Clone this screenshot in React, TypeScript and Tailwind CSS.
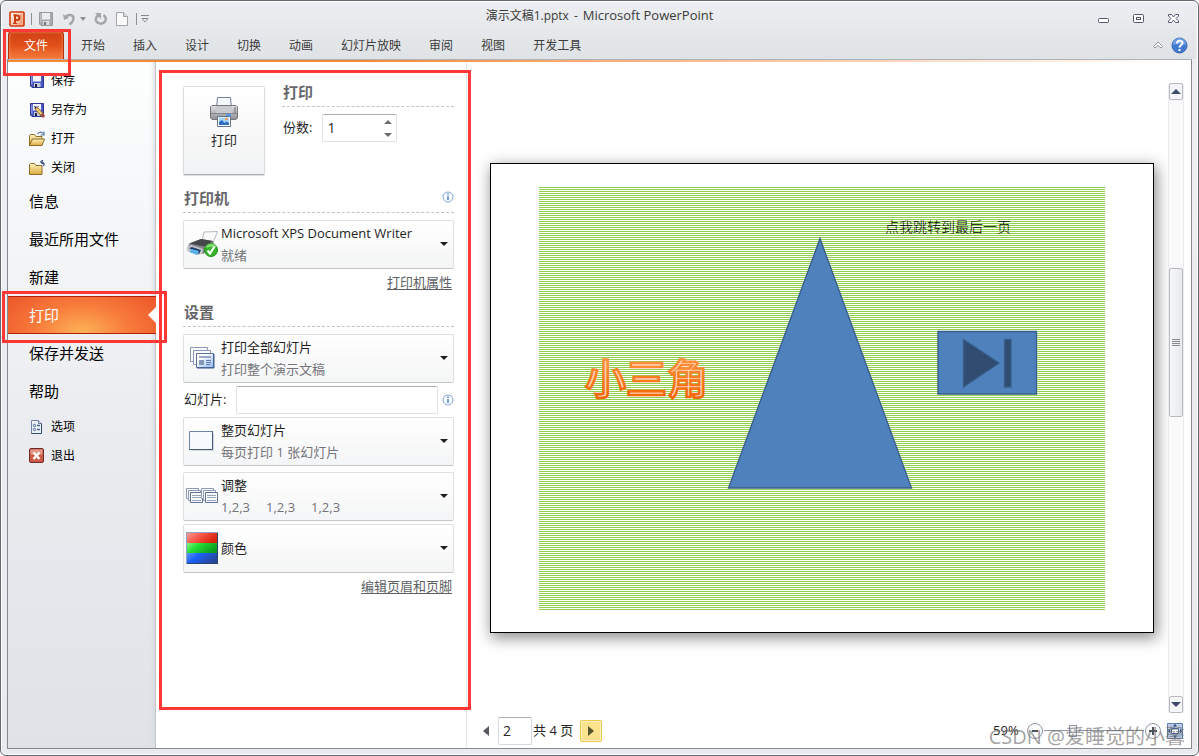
import { useState } from "react";
import type { ReactNode } from "react";

const tabs = [
  "开始",
  "插入",
  "设计",
  "切换",
  "动画",
  "幻灯片放映",
  "审阅",
  "视图",
  "开发工具",
];

function PowerPointLogo() {
  return (
    <svg width="16" height="16" viewBox="0 0 16 16" aria-hidden="true">
      <defs>
        <linearGradient id="logoFill" x1="0" y1="0" x2="1" y2="1">
          <stop offset="0" stopColor="#fff" />
          <stop offset="1" stopColor="#f79a72" />
        </linearGradient>
      </defs>
      <rect x="1" y="1" width="14" height="14" rx="1" fill="url(#logoFill)" stroke="#cf3a0c" strokeWidth="1.600" />
      <path d="M11 3h2v10H7v-1h4z" fill="#f4a384" />
      <path d="M6 12.500V4.500h2.200a2.200 2.200 0 0 1 0 4.400H6" fill="none" stroke="#c8400f" strokeWidth="2" />
      <path d="M4 4h3M4 12.500h4" stroke="#c8400f" strokeWidth="1.200" />
    </svg>
  );
}

function FloppyIcon({ gray, pencil }: { gray?: boolean; pencil?: boolean }) {
  return (
    <svg width="16" height="16" viewBox="0 0 16 16" aria-hidden="true">
      <path d="M1.500 1.500h13v13H3l-1.500-1.500z" fill={gray ? "#a6a7aa" : "#4a58c4"} stroke={gray ? "#98999c" : "#2f388e"} />
      <path d="M4 2h8v6.500H4z" fill={gray ? "#ecedef" : "#f2f4ff"} />
      <path d="M2 2.500h1.500v9H2z" fill={gray ? "#bcbdc0" : "#8994e4"} />
      <path d="M5 10h6.500v4H5z" fill={gray ? "#d8d9db" : "#c4cad8"} />
      <path d="M6 11h2v3H6z" fill={gray ? "#77787b" : "#1c2046"} />
      {pencil && (
        <>
          <path d="M5 4.500h5M5 6.500h4" stroke="#9aa3cf" />
          <path d="M7 6l6.500 7" stroke="#8d6420" strokeWidth="3.600" />
          <path d="M7 6l6 6.500" stroke="#f5cf72" strokeWidth="2" />
          <path d="M12.500 12l2.500 3" stroke="#a34a40" strokeWidth="3" />
          <path d="M5 4l3 1.500-1.500 1.500z" fill="#333" />
        </>
      )}
    </svg>
  );
}

function FolderIcon({ open }: { open?: boolean }) {
  return (
    <svg width="16" height="16" viewBox="0 0 16 16" aria-hidden="true">
      <defs>
        <linearGradient id="folderFill" x1="0" y1="0" x2="0" y2="1">
          <stop offset="0" stopColor="#fdf3bf" />
          <stop offset="1" stopColor="#dba93c" />
        </linearGradient>
      </defs>
      <path d="M.5 14.500v-10l1-1h4l1.500 2h6v9z" fill="url(#folderFill)" stroke="#8b6c28" />
      {open ? (
        <>
          <path d="M.5 14.500l3-6.500h12l-2.500 6.500z" fill="url(#folderFill)" stroke="#8b6c28" />
          <path d="M8.500 3c1-2 4-2.500 5.500-.5M15 .5V4h-3.500" fill="none" stroke="#4d6f9e" strokeWidth="1.200" />
        </>
      ) : (
        <path d="M14.500 6c1-2 .5-3.500-1.500-4M11.500 2l2.500-2M11.500 2l2.500 2" fill="none" stroke="#344d78" strokeWidth="1.200" />
      )}
    </svg>
  );
}

function OptionsIcon() {
  return (
    <svg width="16" height="16" viewBox="0 0 16 16" aria-hidden="true">
      <path d="M2.500 1.500h7l3 3v10h-10z" fill="#edf2f8" stroke="#70849e" />
      <path d="M12.500 4v10.500h-10" fill="none" stroke="#334b6d" />
      <path d="M9.500 1.500v3h3" fill="#c4d2e4" stroke="#70849e" />
      <circle cx="5.500" cy="6.500" r="1.200" fill="none" stroke="#4c6790" />
      <circle cx="5.500" cy="10.500" r="1.200" fill="none" stroke="#4c6790" />
      <path d="M8 6.500h3M8 10.500h3" stroke="#4c6790" strokeWidth="1.400" />
    </svg>
  );
}

function ExitIcon() {
  return (
    <svg width="16" height="16" viewBox="0 0 16 16" aria-hidden="true">
      <rect x=".5" y=".5" width="14" height="14" rx="1.500" fill="#cc5a48" stroke="#6f2c26" />
      <path d="M1.500 1.500h12v5h-12z" fill="#e2988a" />
      <path d="M4.500 4.500l6 6.500M10.500 4.500l-6 6.500" stroke="#fff" strokeWidth="2.400" />
    </svg>
  );
}

function PrinterIcon() {
  return (
    <svg width="30" height="32" viewBox="0 0 30 32" aria-hidden="true">
      <defs>
        <linearGradient id="printerBody" x1="0" y1="0" x2="0" y2="1">
          <stop offset="0" stopColor="#e4e4e6" />
          <stop offset="1" stopColor="#8e8f94" />
        </linearGradient>
      </defs>
      <path d="M7.500 12l1-10.500h13l1 10.500z" fill="#f4f7fc" stroke="#71819a" />
      <path d="M1.500 11l1.500-1.500h24l1.500 1.500v11L27 23.500H3L1.500 22z" fill="url(#printerBody)" stroke="#77787d" />
      <path d="M7 10h16v7H7z" fill="#c9cace" />
      <path d="M2 17.500h26" stroke="#84868c" />
      <path d="M25 12h2M25 14h2M25 16h2" stroke="#686a70" />
      <path d="M17 19h5" stroke="#4f9bf0" strokeWidth="2" />
      <path d="M8.500 20.500h13v10h-13z" fill="#fff" stroke="#61738f" />
      <path d="M10 21.500h10v7.500H10z" fill="#a8d2f7" />
      <path d="M10 29v-3l3-2 2.500 3 2-1.500L20 27v2z" fill="#2e6fc4" />
      <circle cx="17.500" cy="23" r="1.300" fill="#f29a4a" />
    </svg>
  );
}

function XpsPrinterIcon() {
  return (
    <svg width="32" height="32" viewBox="0 0 32 32" aria-hidden="true">
      <path d="M18 4l13.500-.5L27 15l-11-2z" fill="#fafafa" stroke="#b9babd" />
      <path d="M3 16l12-5 12 2 1 6-11 7-16-5z" fill="#85878b" />
      <path d="M3 15.500l12-4.500 12 2-9 5.500z" fill="#46474a" />
      <path d="M1 19l4-2 12 4-1 5-4 1-11-4z" fill="#c6c8cc" />
      <path d="M3 20l3-1 9 3-2 4z" fill="#1e3d66" />
      <path d="M6 21l7 2-2 4-8-3z" fill="#58b2ea" />
      <circle cx="25" cy="22" r="6.500" fill="#35b52b" stroke="#1e8e19" />
      <path d="M19.500 20a6 6 0 0 1 11-1q-5-1-11 1z" fill="#7edb70" />
      <path d="M21.500 22.500l2.500 3 4.500-7" fill="none" stroke="#fff" strokeWidth="2.200" />
    </svg>
  );
}

function SlidesIcon() {
  return (
    <svg width="32" height="32" viewBox="0 0 32 32" aria-hidden="true">
      <defs>
        <linearGradient id="slideFill" x1="0" y1="0" x2="1" y2="1">
          <stop offset=".3" stopColor="#fff" />
          <stop offset="1" stopColor="#8fb5f5" />
        </linearGradient>
      </defs>
      <path d="M4.500 5.500h17v14h-17z" fill="#fcfcfe" stroke="#8b98b4" />
      <path d="M7.500 8.500h17v14h-17z" fill="#fcfcfe" stroke="#8b98b4" />
      <path d="M10.500 11.500h17v14h-17z" fill="url(#slideFill)" stroke="#5a7199" />
      <path d="M28 12v14H11" fill="none" stroke="#33588f" />
      <path d="M13 15h12" stroke="#9aaac6" strokeWidth="2" />
      <path d="M13 18h5v5h-5z" fill="#8598b9" />
      <path d="M20 18.500h5M20 20.500h5M20 22.500h4" stroke="#5e7bab" />
    </svg>
  );
}

function FullPageIcon() {
  return (
    <svg width="32" height="32" viewBox="0 0 32 32" aria-hidden="true">
      <path d="M5 8h23v18H5z" fill="#d5d8dd" />
      <path d="M3.500 6.500h23v18h-23z" fill="#f8f9fd" stroke="#7085a3" />
      <path d="M26.500 6v18.500H3" fill="none" stroke="#435b7d" />
    </svg>
  );
}

function CollateIcon() {
  return (
    <svg width="32" height="32" viewBox="0 0 32 32" aria-hidden="true">
      {[0, 15].map((x) => (
        <g key={x} transform={`translate(${x} 0)`} fill="#fbfcff" stroke="#8b99b3">
          <path d="M.5 8.500h12v10H.5z" />
          <path d="M2.500 10.500h12v10h-12z" />
          <path d="M4.500 12.500h12v10h-12z" stroke="#5f7394" />
          <path d="M6 15.500h9M6 17.500h9M6 20.500h9" stroke="#93a5c4" />
        </g>
      ))}
    </svg>
  );
}

function ColorIcon() {
  return (
    <svg width="32" height="32" viewBox="0 0 32 32" aria-hidden="true">
      <defs>
        <linearGradient id="redBand" x1="0" y1="0" x2="1" y2=".4">
          <stop offset="0" stopColor="#f7a39b" />
          <stop offset=".5" stopColor="#f8564a" />
          <stop offset="1" stopColor="#d92310" />
        </linearGradient>
        <linearGradient id="greenBand" x1="0" y1="0" x2="1" y2=".4">
          <stop offset="0" stopColor="#8cf58c" />
          <stop offset=".4" stopColor="#24e034" />
          <stop offset="1" stopColor="#0c9c20" />
        </linearGradient>
        <linearGradient id="blueBand" x1="0" y1="0" x2="1" y2=".4">
          <stop offset="0" stopColor="#6a9cf5" />
          <stop offset=".4" stopColor="#1b60f8" />
          <stop offset="1" stopColor="#27479c" />
        </linearGradient>
      </defs>
      <path d="M0 0h32v11H0z" fill="url(#redBand)" />
      <path d="M0 11h32v10H0z" fill="url(#greenBand)" />
      <path d="M0 21h32v11H0z" fill="url(#blueBand)" />
      <path d="M.5 32V.5H32" fill="none" stroke="#8fa4c8" />
      <path d="M31.500 1v30.500H1" fill="none" stroke="#28456e" />
    </svg>
  );
}

function InfoIcon() {
  return (
    <svg width="12" height="12" viewBox="0 0 12 12" aria-hidden="true">
      <circle cx="6" cy="6" r="5" fill="#f8fbff" stroke="#83a5d8" />
      <path d="M6 2.500V4M6 5v4" stroke="#4978c0" strokeWidth="1.400" />
    </svg>
  );
}

function TitleBar() {
  return (
    <header className="grid h-[30px] grid-cols-[1fr_auto_1fr] text-[#3b3b3b]">
      <div className="flex items-center gap-2 pt-1.5 pl-0.5">
        <PowerPointLogo />
        <div className="-mx-0.5 h-3 w-px bg-[#8d8f93]"></div>
        <button aria-label="保存">
          <FloppyIcon gray />
        </button>
        <button aria-label="撤消" className="flex items-center gap-1">
          <svg width="14" height="14" viewBox="0 0 14 14">
            <path d="M1 2l1 6 5-2z" fill="#a3a5a8" />
            <path d="M3 6c2-4 8-4 8.500 0 .2 3-1.500 4.500-4 6.500" fill="none" stroke="#a3a5a8" strokeWidth="2.400" />
          </svg>
          <svg width="6" height="4" viewBox="0 0 6 4">
            <path d="M0 0h6L3 4z" fill="#8d8f93" />
          </svg>
        </button>
        <button aria-label="重复">
          <svg width="14" height="14" viewBox="0 0 14 14">
            <path d="M5.500 3C2 4 1 7.500 2.500 9.500c2 3 6.500 3 8.500 0 1.500-2.500.5-5-1.500-6.500" fill="none" stroke="#a3a5a8" strokeWidth="2.400" />
            <path d="M1 1h6v6z" fill="#a3a5a8" />
          </svg>
        </button>
        <button aria-label="新建">
          <svg width="12" height="14" viewBox="0 0 12 14">
            <path d="M.5.500h7l4 4v9H.5z" fill="#fafafa" stroke="#a2a4a8" />
            <path d="M7.500.500v4h4" fill="#ddd" stroke="#a2a4a8" />
          </svg>
        </button>
        <div className="h-3 w-px bg-[#8d8f93]"></div>
        <button aria-label="自定义快速访问工具栏" className="-ml-1">
          <svg width="8" height="8" viewBox="0 0 8 8">
            <path d="M0 .5h8" stroke="#85878b" />
            <path d="M1 3.500h6L4 7z" fill="#fff" stroke="#85878b" />
          </svg>
        </button>
      </div>
      <h1 className="flex items-center gap-[5px] text-xs whitespace-pre">
        <span>演示文稿1.pptx</span>
        <span>-</span>
        <span className="text-[13px]">Microsoft PowerPoint</span>
      </h1>
      <div className="flex items-center justify-end gap-6 pt-1.5 pr-[13px]">
        <button aria-label="最小化">
          <svg width="11" height="12" viewBox="0 0 11 12">
            <rect x=".5" y="5.500" width="10" height="4" rx="1" fill="#fff" stroke="#535670" />
          </svg>
        </button>
        <button aria-label="最大化">
          <svg width="11" height="12" viewBox="0 0 11 12">
            <rect x=".5" y="1.500" width="10" height="8" rx="1" fill="#fff" stroke="#535670" />
            <rect x="3.500" y="4.500" width="4" height="2" fill="#fff" stroke="#535670" />
          </svg>
        </button>
        <button aria-label="关闭">
          <svg width="11" height="12" viewBox="0 0 11 12">
            <path d="M.5 1.500h3l2 2.500 2-2.500h3v1.500L8 5.500 10.500 8v1.500h-3L5.500 7l-2 2.500h-3V8L3 5.500.5 3z" fill="#fff" stroke="#535670" />
          </svg>
        </button>
      </div>
    </header>
  );
}

function Ribbon() {
  return (
    <nav className="flex h-7 items-stretch text-xs text-[#3b3b3b]">
      <div className="relative z-20 mr-[3px] ml-px flex">
        <button className="w-14 rounded-t-sm border border-b-0 border-[#b5300a] bg-linear-to-b from-[#cf3f14] via-[#e2501a] to-[#f47a3a] text-white shadow-[inset_0_0_3px_#f79a60]">
          文件
        </button>
        <div className="pointer-events-none absolute -top-0.5 -right-[7px] -bottom-[17px] -left-[5px] border-3 border-[#ff3737]"></div>
      </div>
      {tabs.map((tab) => (
        <button key={tab} className="px-3.5 pt-0.5 whitespace-nowrap">
          {tab}
        </button>
      ))}
      <div className="ml-auto flex items-center gap-2 pr-1">
        <button aria-label="功能区最小化">
          <svg width="10" height="8" viewBox="0 0 10 8">
            <path d="M.5 5.500L5 1l4.500 4.500-1.500 1.500-3-2.500L2 7z" fill="#fff" stroke="#929498" />
          </svg>
        </button>
        <button aria-label="帮助">
          <svg width="17" height="17" viewBox="0 0 17 17">
            <circle cx="8.500" cy="8.500" r="7.500" fill="#4179cf" stroke="#3463ae" />
            <path d="M1.500 8a7 7 0 0 1 14 0q-7-2-14 0z" fill="#6f9de2" />
            <path d="M6 6.500C6 3 11.500 3 11.500 6c0 2-3 2-3 4.500" fill="none" stroke="#fff" strokeWidth="2" />
            <path d="M8.500 12v2" stroke="#fff" strokeWidth="2" />
          </svg>
        </button>
      </div>
    </nav>
  );
}

type SmallItemProps = {
  icon: ReactNode;
  label: string;
};

function SmallItem({ icon, label }: SmallItemProps) {
  return (
    <button className="flex h-[29px] items-center gap-1.5 pl-[21px] text-xs">
      {icon}
      {label}
    </button>
  );
}

function LargeItem({ label }: { label: string }) {
  return <button className="h-[38px] pl-[21px] text-left text-[15px]">{label}</button>;
}

function Sidebar() {
  return (
    <aside className="flex w-[148px] shrink-0 flex-col border-r border-[#c0c4c9] bg-linear-to-b from-[#fdfefe] via-[#ebedf0] to-[#dfe2e7] pt-1 text-black shadow-[inset_-4px_0_5px_-3px_#d3d7dc]">
      <SmallItem icon={<FloppyIcon />} label="保存" />
      <SmallItem icon={<FloppyIcon pencil />} label="另存为" />
      <SmallItem icon={<FolderIcon open />} label="打开" />
      <SmallItem icon={<FolderIcon />} label="关闭" />
      <LargeItem label="信息" />
      <LargeItem label="最近所用文件" />
      <LargeItem label="新建" />
      <div className="relative z-20 -mr-px flex h-[38px]">
        <button className="flex flex-1 items-center justify-between border-y border-[#b3200c] bg-[radial-gradient(ellipse_75px_45px_at_50%_100%,#fdb458,#f87d3c_60%,#ea4e26_140%)] pl-[21px] text-[15px] text-white">
          打印
          <svg width="8" height="16" viewBox="0 0 8 16" aria-hidden="true">
            <path d="M8 0v16L0 8z" fill="#fff" />
          </svg>
        </button>
        <div className="pointer-events-none absolute -top-[5px] -right-[11px] -bottom-[9px] -left-1.5 border-3 border-[#ff3737]"></div>
      </div>
      <LargeItem label="保存并发送" />
      <LargeItem label="帮助" />
      <div className="mt-0.5 flex flex-col">
        <SmallItem icon={<OptionsIcon />} label="选项" />
        <SmallItem icon={<ExitIcon />} label="退出" />
      </div>
    </aside>
  );
}

function SectionHeading({ title, info }: { title: string; info?: boolean }) {
  return (
    <div className="flex h-7 items-center justify-between border-b border-dashed border-[#c3c4c8]">
      <h2 className="pl-px text-[15px] font-bold text-[#66666a]">{title}</h2>
      {info && (
        <button aria-label="打印机信息" className="pb-1">
          <InfoIcon />
        </button>
      )}
    </div>
  );
}

type PickerProps = {
  icon: ReactNode;
  title: string;
  children?: ReactNode;
};

function Picker({ icon, title, children }: PickerProps) {
  return (
    <button
      aria-haspopup="listbox"
      className="flex h-[49px] w-full items-center gap-[3px] rounded-xs border border-[#dddfe1] border-b-[#c4c6c8] bg-linear-to-b from-white to-[#f4f5f6] pr-[5px] pb-0.5 pl-0.5 text-left text-[13px]"
    >
      {icon}
      <span className="flex flex-1 flex-col leading-[22px] whitespace-nowrap">
        <span className="text-[#1e1e1e]">{title}</span>
        {children && <span className="flex gap-4 text-[#747478]">{children}</span>}
      </span>
      <svg width="8" height="4" viewBox="0 0 8 4" aria-hidden="true">
        <path d="M0 0h8L4 4z" fill="#1e1e1e" />
      </svg>
    </button>
  );
}

function PrintSettings() {
  const [copies, setCopies] = useState(1);

  return (
    <section className="relative z-10 w-[311px] shrink-0 border-r border-[#e6e7e9] pt-[17px] pr-3 pl-[27px] text-[13px] text-[#262626]">
      <div className="flex gap-[17px]">
        <button className="mt-[7px] flex h-[89px] w-[82px] flex-col items-center rounded-xs border border-[#d9dbdd] border-b-[#a9abad] bg-linear-to-b from-white to-[#f1f2f3] pt-[9px] shadow-[0_1px_1px_#ddd]">
          <PrinterIcon />
          <span className="leading-6">打印</span>
        </button>
        <div className="flex-1">
          <SectionHeading title="打印" />
          <div className="mt-[7px] flex items-center gap-2.5 pl-px">
            <label htmlFor="copies" className="whitespace-nowrap">
              份数:
            </label>
            <div className="flex h-7 w-[75px] rounded-xs border border-[#dde1e8] border-t-[#abadb3] bg-white">
              <input
                id="copies"
                type="text"
                inputMode="numeric"
                value={copies}
                onChange={(e) => setCopies(Number(e.target.value) || 1)}
                className="w-full min-w-0 pl-1 text-sm outline-none"
              />
              <div className="flex w-4 shrink-0 flex-col items-center justify-around">
                <button aria-label="增加" onClick={() => setCopies(copies + 1)}>
                  <svg width="8" height="4" viewBox="0 0 8 4">
                    <path d="M0 4h8L4 0z" fill="#6b6d70" />
                  </svg>
                </button>
                <button aria-label="减少" onClick={() => setCopies(Math.max(1, copies - 1))}>
                  <svg width="8" height="4" viewBox="0 0 8 4">
                    <path d="M0 0h8L4 4z" fill="#6b6d70" />
                  </svg>
                </button>
              </div>
            </div>
          </div>
        </div>
      </div>

      <div className="mt-2.5 mb-[7px]">
        <SectionHeading title="打印机" info />
      </div>
      <Picker icon={<XpsPrinterIcon />} title="Microsoft XPS Document Writer">
        就绪
      </Picker>
      <div className="flex h-7 items-center justify-end pr-0.5">
        <a href="#" className="text-[#5d5f63] underline underline-offset-2">
          打印机属性
        </a>
      </div>

      <div className="mt-0.5 mb-[7px]">
        <SectionHeading title="设置" />
      </div>
      <Picker icon={<SlidesIcon />} title="打印全部幻灯片">
        打印整个演示文稿
      </Picker>
      <div className="my-[3px] flex items-center gap-2.5 pl-px">
        <label htmlFor="slides" className="whitespace-nowrap">
          幻灯片:
        </label>
        <input
          id="slides"
          type="text"
          className="h-7 min-w-0 flex-1 rounded-xs border border-[#dde1e8] border-t-[#abadb3] bg-white px-1 outline-none"
        />
        <button aria-label="幻灯片信息" className="-ml-1.5">
          <InfoIcon />
        </button>
      </div>
      <Picker icon={<FullPageIcon />} title="整页幻灯片">
        每页打印 1 张幻灯片
      </Picker>
      <div className="mt-1.5 mb-[3px]">
        <Picker icon={<CollateIcon />} title="调整">
          <span>1,2,3</span>
          <span>1,2,3</span>
          <span>1,2,3</span>
        </Picker>
      </div>
      <Picker icon={<ColorIcon />} title="颜色" />
      <div className="flex h-7 items-center justify-end pr-0.5">
        <a href="#" className="text-[#5d5f63] underline underline-offset-2">
          编辑页眉和页脚
        </a>
      </div>

      <div className="pointer-events-none absolute top-2 -right-[5px] bottom-[38px] left-[3px] border-3 border-[#ff3737]"></div>
    </section>
  );
}

function Slide() {
  return (
    <div className="flex-1 border border-black bg-white shadow-[2px_4px_14px_1px_rgba(0,0,0,0.45)]">
      <svg viewBox="0 0 662 468" className="block w-full" role="img" aria-label="幻灯片 2">
        <defs>
          <pattern id="stripes" x="48" y="23" width="4" height="2" patternUnits="userSpaceOnUse">
            <rect width="4" height="1" fill="#92d050" shapeRendering="crispEdges" />
          </pattern>
          <linearGradient id="wordArt" x1="0" y1="0" x2="0" y2="1">
            <stop offset=".1" stopColor="#ff9a4a" />
            <stop offset=".9" stopColor="#f26400" />
          </linearGradient>
        </defs>
        <rect x="48" y="23" width="566" height="423" fill="url(#stripes)" />
        <path d="M329 74.500L420.500 324H237.500z" fill="#4f81bd" stroke="#385d8a" strokeWidth="1.300" />
        <text
          x="94"
          y="230"
          fontSize="41"
          fontWeight="500"
          fill="#ffd9c0"
          stroke="url(#wordArt)"
          strokeWidth="2.600"
          className="font-['Noto_Sans_CJK_SC',sans-serif]"
        >
          小三角
        </text>
        <text x="394" y="68" fontSize="14" className="font-['Noto_Sans_CJK_SC',sans-serif] font-light">
          点我跳转到最后一页
        </text>
        <g stroke="#385d8a" strokeWidth="1.300">
          <path d="M447 167.500h98.500v62.500H447z" fill="#4f81bd" />
          <path d="M472.500 175.500L508 199l-35.500 24z" fill="#304d71" />
          <path d="M513.500 175.500h6.500V223h-6.500z" fill="#304d71" />
        </g>
      </svg>
    </div>
  );
}

function ScrollBar() {
  return (
    <div className="flex w-4 shrink-0 flex-col self-stretch border-x border-[#ececee] bg-[#fafafb]">
      <button aria-label="向上滚动" className="flex h-[17px] items-center justify-center rounded-xs border border-[#b7babf] bg-[#f4f5f6]">
        <svg width="10" height="5" viewBox="0 0 10 5">
          <path d="M0 5h10L5 0z" fill="#3f4a6b" />
        </svg>
      </button>
      <div className="grow-[168] basis-0"></div>
      <div className="flex grow-[147] basis-0 flex-col items-center justify-center gap-px rounded-xs border border-[#b7babf] bg-linear-to-r from-[#f6f7f8] to-[#e7e9ea]">
        <div className="h-px w-2 bg-[#85888d]"></div>
        <div className="h-px w-2 bg-[#85888d]"></div>
        <div className="h-px w-2 bg-[#85888d]"></div>
        <div className="h-px w-2 bg-[#85888d]"></div>
      </div>
      <div className="grow-[279] basis-0"></div>
      <button aria-label="向下滚动" className="flex h-[17px] items-center justify-center rounded-xs border border-[#b7babf] bg-[#f4f5f6]">
        <svg width="10" height="5" viewBox="0 0 10 5">
          <path d="M0 0h10L5 5z" fill="#3f4a6b" />
        </svg>
      </button>
    </div>
  );
}

function PreviewFooter() {
  const [page, setPage] = useState(2);
  const [zoom, setZoom] = useState(59);

  return (
    <footer className="relative flex h-[35px] items-center pr-2 pl-4 text-sm text-[#262626]">
      <button aria-label="上一页" onClick={() => setPage(Math.max(1, page - 1))}>
        <svg width="6" height="10" viewBox="0 0 6 10">
          <path d="M6 0v10L0 5z" fill="#55585c" />
        </svg>
      </button>
      <input
        aria-label="当前页"
        type="text"
        value={page}
        onChange={(e) => setPage(Number(e.target.value) || 1)}
        className="ml-[9px] h-7 w-[34px] rounded-xs border border-[#d4dae4] border-t-[#abadb3] bg-white pl-1 outline-none"
      />
      <span className="pl-px text-[13px] whitespace-nowrap">共 4 页</span>
      <button
        aria-label="下一页"
        onClick={() => setPage(Math.min(4, page + 1))}
        className="ml-[7px] flex size-[22px] items-center justify-center rounded-xs border border-[#eec84c] bg-[#fbe28c] shadow-[inset_0_0_0_1px_#fdf3c4]"
      >
        <svg width="6" height="10" viewBox="0 0 6 10">
          <path d="M0 0v10l6-5z" fill="#55522c" />
        </svg>
      </button>

      <div className="ml-auto flex items-center">
        <label htmlFor="zoom" className="mr-1.5 w-7 text-[13px]">
          {zoom}%
        </label>
        <button aria-label="缩小" onClick={() => setZoom(Math.max(10, zoom - 10))}>
          <svg width="16" height="16" viewBox="0 0 16 16">
            <circle cx="8" cy="8" r="7.500" fill="#fdfdfe" stroke="#8d96a6" />
            <path d="M5 8h6" stroke="#4c525c" strokeWidth="2" />
          </svg>
        </button>
        <input
          id="zoom"
          type="range"
          min="10"
          max="190"
          value={zoom}
          onChange={(e) => setZoom(Number(e.target.value))}
          className="mx-px h-4 w-[100px] appearance-none bg-[linear-gradient(#8d96a6,#8d96a6)] bg-[length:100%_1px] bg-center bg-no-repeat [&::-webkit-slider-thumb]:h-3 [&::-webkit-slider-thumb]:w-2 [&::-webkit-slider-thumb]:appearance-none [&::-webkit-slider-thumb]:border [&::-webkit-slider-thumb]:border-[#8d96a6] [&::-webkit-slider-thumb]:bg-[#f4f5f7]"
        />
        <button aria-label="放大" onClick={() => setZoom(Math.min(190, zoom + 10))}>
          <svg width="16" height="16" viewBox="0 0 16 16">
            <circle cx="8" cy="8" r="7.500" fill="#fdfdfe" stroke="#8d96a6" />
            <path d="M4 8h8M8 4v8" stroke="#4c525c" strokeWidth="2" />
          </svg>
        </button>
        <button aria-label="缩放到页面" className="ml-1.5">
          <svg width="16" height="16" viewBox="0 0 16 16">
            <path d="M.5.500h15v15H.5z" fill="#b9cbe6" stroke="#5f7fb0" />
            <path d="M4.500 5.500h7v5h-7z" fill="#fff" stroke="#4a6592" />
            <path d="M6 3.500L8 1l2 2.500zM6 12.500L8 15l2-2.500zM3 6L1 8l2 2zM13 6l2 2-2 2z" fill="#24406e" />
          </svg>
        </button>
      </div>
      <p className="pointer-events-none absolute right-1.5 -bottom-px text-xl leading-6 whitespace-nowrap text-[#6e6e6e]/65">
        CSDN @爱睡觉的小馨
      </p>
    </footer>
  );
}

export default function App() {
  return (
    <div className="flex min-h-screen flex-col rounded-md border border-[#626972] bg-linear-to-b from-[#edeef2] to-[#e8eaee] px-1.5 pb-1.5 font-['Open_Sans','Noto_Sans_CJK_SC',sans-serif] shadow-[inset_0_0_0_1px_#fff]">
      <div className="-mx-1 bg-linear-to-b from-transparent to-[#dfe3e5] px-1">
        <TitleBar />
        <Ribbon />
      </div>
      <div className="flex flex-1 flex-col border border-[#868b92] border-t-[#aeb3b9] bg-white">
        <div className="h-0.5 bg-linear-to-r from-[#f58a35] from-30% to-white"></div>
        <div className="flex flex-1">
          <Sidebar />
          <PrintSettings />
          <main className="flex min-w-0 flex-1 flex-col">
            <div className="flex flex-1 items-center gap-3.5 pt-[21px] pr-[7px] pl-[23px]">
              <Slide />
              <ScrollBar />
            </div>
            <PreviewFooter />
          </main>
        </div>
      </div>
    </div>
  );
}
